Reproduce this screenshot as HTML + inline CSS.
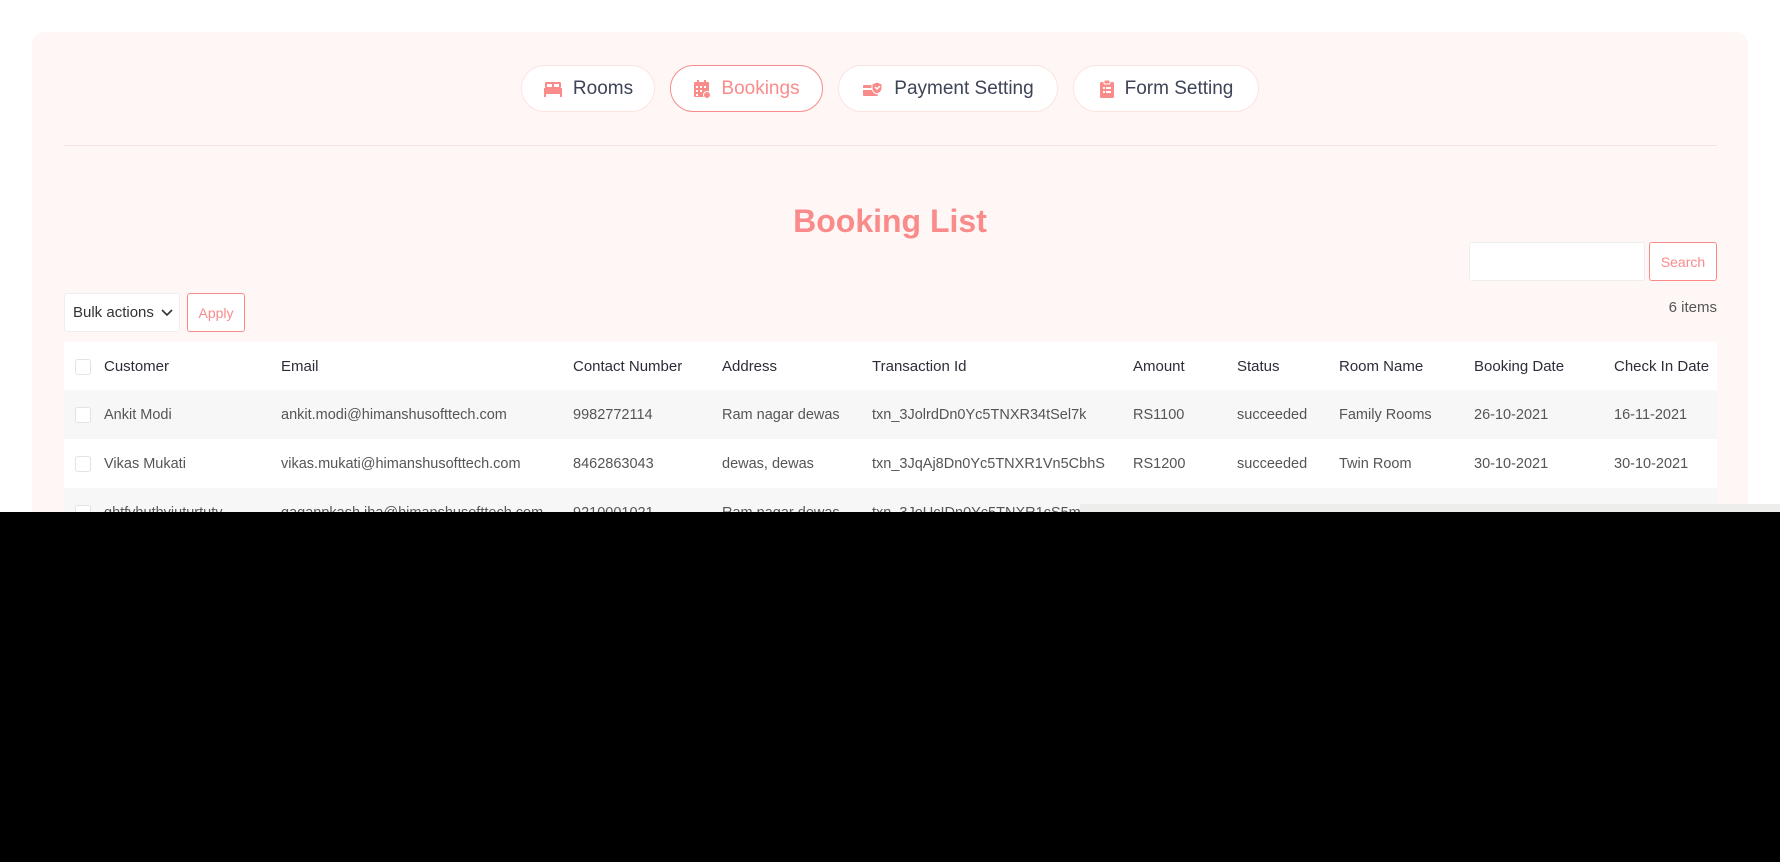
<!DOCTYPE html>
<html><head><meta charset="utf-8"><style>
*{box-sizing:border-box;margin:0;padding:0}
body{width:1780px;height:862px;background:#fff;font-family:"Liberation Sans",sans-serif;position:relative;overflow:hidden;color:#3b3b4a}
.card{position:absolute;left:32px;top:32px;width:1716px;height:560px;background:#fff7f6;border-radius:12px}
.tab{position:absolute;top:65px;height:47px;background:#fff;border:1px solid #fbe3e1;border-radius:24px;font-size:19px;color:#3e4457;display:flex;align-items:center;justify-content:center;gap:10px}
.tab.act{border-color:#f98b8b;color:#f98b8b}
.div{position:absolute;left:64px;top:145px;width:1653px;height:1px;background:#f5e4e2}
h1{position:absolute;left:0;width:1780px;top:203px;text-align:center;font-size:32px;color:#f98b8b;font-weight:bold}
.inp{position:absolute;left:1469px;top:242px;width:176px;height:39px;background:#fff;border:1px solid #eee;border-radius:3px}
.btn{position:absolute;background:#fff;border:1px solid #f98b8b;color:#f98b8b;font-size:14px;border-radius:3px;display:flex;align-items:center;justify-content:center}
.sel{position:absolute;left:64px;top:293px;width:116px;height:39px;background:#fff;border:1px solid #eee;border-radius:3px;font-size:15px;color:#333;padding:10px 0 0 8px}
.items{position:absolute;right:63px;top:299px;font-size:15px;color:#555}
table{position:absolute;left:64px;top:342px;width:1653px;border-collapse:collapse;font-size:14.5px}
td{height:49px;white-space:nowrap;position:relative}
tr.h td{height:48px;font-size:15px;color:#2d2d3a;background:#fff}
tr.g td{background:#f7f7f7}
tr.w td{background:#fff}
.cb{display:inline-block;width:16px;height:16px;border:1px solid #e3e3e3;border-radius:3px;background:#fff;margin-left:11px;vertical-align:middle}
td{color:#555}
</style></head><body>
<div class="card"></div>
<div class="tab" style="left:521px;width:134px">
<svg width="20" height="18" viewBox="0 0 20 18"><rect x="2" y="2" width="16" height="6" rx="1" fill="#f98b8b"/><rect x="1" y="8" width="18" height="6" fill="#f98b8b"/><rect x="1" y="14" width="2" height="3" fill="#f98b8b"/><rect x="17" y="14" width="2" height="3" fill="#f98b8b"/><rect x="4" y="4" width="5" height="3" fill="#fff"/><rect x="11" y="4" width="5" height="3" fill="#fff"/></svg>Rooms</div>
<div class="tab act" style="left:670px;width:153px">
<svg width="18" height="20" viewBox="0 0 18 20"><rect x="1" y="3" width="15" height="15" rx="1" fill="#f98b8b"/><g fill="#fff"><rect x="3" y="7" width="2" height="2"/><rect x="7" y="7" width="2" height="2"/><rect x="11" y="7" width="2" height="2"/><rect x="3" y="11" width="2" height="2"/><rect x="7" y="11" width="2" height="2"/><rect x="3" y="15" width="2" height="2"/></g><rect x="4" y="1" width="2" height="4" fill="#f98b8b"/><rect x="11" y="1" width="2" height="4" fill="#f98b8b"/><circle cx="14" cy="16" r="3.5" fill="#f98b8b" stroke="#fff"/></svg>Bookings</div>
<div class="tab" style="left:838px;width:220px">
<svg width="22" height="18" viewBox="0 0 22 18"><rect x="1" y="5" width="15" height="11" rx="1" fill="#f98b8b"/><rect x="1" y="8" width="15" height="2" fill="#fff"/><path d="M15 2l5 2v4c0 3-2 5-5 6-3-1-5-3-5-6V4z" fill="#f98b8b" stroke="#fff"/><path d="M13 7l2 2 3-3" stroke="#fff" stroke-width="1.5" fill="none"/></svg>Payment Setting</div>
<div class="tab" style="left:1073px;width:186px">
<svg width="16" height="20" viewBox="0 0 16 20"><rect x="1" y="3" width="14" height="16" rx="1.5" fill="#f98b8b"/><rect x="5" y="1" width="6" height="4" rx="1" fill="#f98b8b" stroke="#fff"/><g fill="#fff"><rect x="4" y="8" width="2" height="2"/><rect x="7" y="8" width="5" height="2"/><rect x="4" y="12" width="2" height="2"/><rect x="7" y="12" width="5" height="2"/></g></svg>Form Setting</div>
<div class="div"></div>
<h1>Booking List</h1>
<div class="inp"></div>
<div class="btn" style="left:1649px;top:242px;width:68px;height:39px">Search</div>
<div class="sel">Bulk actions <svg width="12" height="8" viewBox="0 0 12 8" style="margin-left:3px"><path d="M1 1l5 5 5-5" stroke="#333" stroke-width="1.6" fill="none"/></svg></div>
<div class="btn" style="left:187px;top:293px;width:58px;height:39px">Apply</div>
<div class="items">6 items</div>
<table>
<colgroup><col style="width:40px"><col style="width:177px"><col style="width:292px"><col style="width:149px"><col style="width:150px"><col style="width:261px"><col style="width:104px"><col style="width:102px"><col style="width:135px"><col style="width:140px"><col></colgroup>
<tr class="h"><td><span class="cb"></span></td><td>Customer</td><td>Email</td><td>Contact Number</td><td>Address</td><td>Transaction Id</td><td>Amount</td><td>Status</td><td>Room Name</td><td>Booking Date</td><td>Check In Date</td></tr>
<tr class="g"><td><span class="cb"></span></td><td>Ankit Modi</td><td>ankit.modi@himanshusofttech.com</td><td>9982772114</td><td>Ram nagar dewas</td><td>txn_3JolrdDn0Yc5TNXR34tSel7k</td><td>RS1100</td><td>succeeded</td><td>Family Rooms</td><td>26-10-2021</td><td>16-11-2021</td></tr>
<tr class="w"><td><span class="cb"></span></td><td>Vikas Mukati</td><td>vikas.mukati@himanshusofttech.com</td><td>8462863043</td><td>dewas, dewas</td><td>txn_3JqAj8Dn0Yc5TNXR1Vn5CbhS</td><td>RS1200</td><td>succeeded</td><td>Twin Room</td><td>30-10-2021</td><td>30-10-2021</td></tr>
<tr class="g"><td><span class="cb"></span></td><td>ghtfyhuthyjuturtuty</td><td>gaganpkash.jha@himanshusofttech.com</td><td>9210001021</td><td>Ram nagar dewas</td><td>txn_3JoUcIDn0Yc5TNXR1cS5m4V</td><td></td><td></td><td></td><td></td><td></td></tr>
</table>
<div style="position:absolute;left:1080px;top:504px;width:700px;height:8px;background:#ededeb"></div>
<div style="position:absolute;left:0;top:512px;width:1780px;height:350px;background:#000"></div>
</body></html>
